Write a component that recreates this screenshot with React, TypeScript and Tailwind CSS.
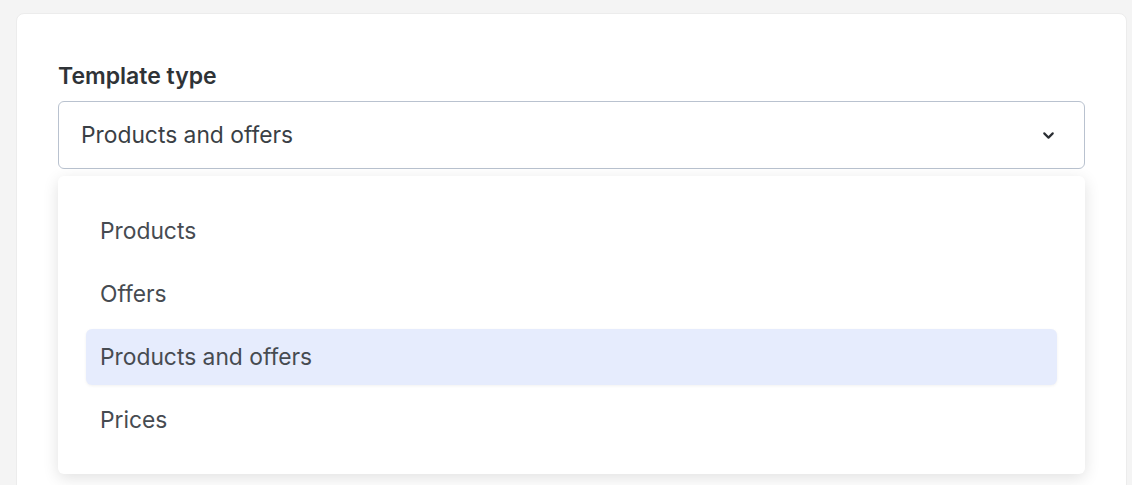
import { ChevronDown } from "lucide-react";

const options = ["Products", "Offers", "Products and offers", "Prices"];

export default function App() {
  const selected = "Products and offers";

  return (
    <div className="h-[485px] overflow-hidden bg-[#f4f4f4] pl-4 pr-[5px] pt-[13px] font-['Inter',sans-serif]">
      <div className="h-[520px] rounded-lg border border-[#ececec] bg-white px-[41px] pt-[50px]">
        <label className="block text-[23px] font-semibold leading-6 text-[#2f3337]">
          Template type
        </label>
        <div className="relative mt-[13px]">
          <button className="flex h-[68px] w-full items-center justify-between rounded-md border border-[#b9c2cf] bg-white pl-[22px] pr-[27px] text-left text-[22.8px] text-[#3a3f45]">
            <span>{selected}</span>
            <ChevronDown size={17} strokeWidth={3} className="text-[#2a2e33]" />
          </button>
          <ul className="mt-[7px] flex flex-col gap-[7px] rounded-md bg-white px-[28px] pb-[26px] pt-[27px] shadow-[0_4px_16px_rgba(0,0,0,0.12)]">
            {options.map((opt) => (
              <li
                key={opt}
                className={
                  "flex h-[56px] items-center rounded-md px-[14px] text-[22.8px] text-[#464b51] " +
                  (opt === selected ? "bg-[#e6ecfd] shadow-[0_1px_3px_rgba(0,0,0,0.06)]" : "")
                }
              >
                {opt}
              </li>
            ))}
          </ul>
        </div>
      </div>
    </div>
  );
}
